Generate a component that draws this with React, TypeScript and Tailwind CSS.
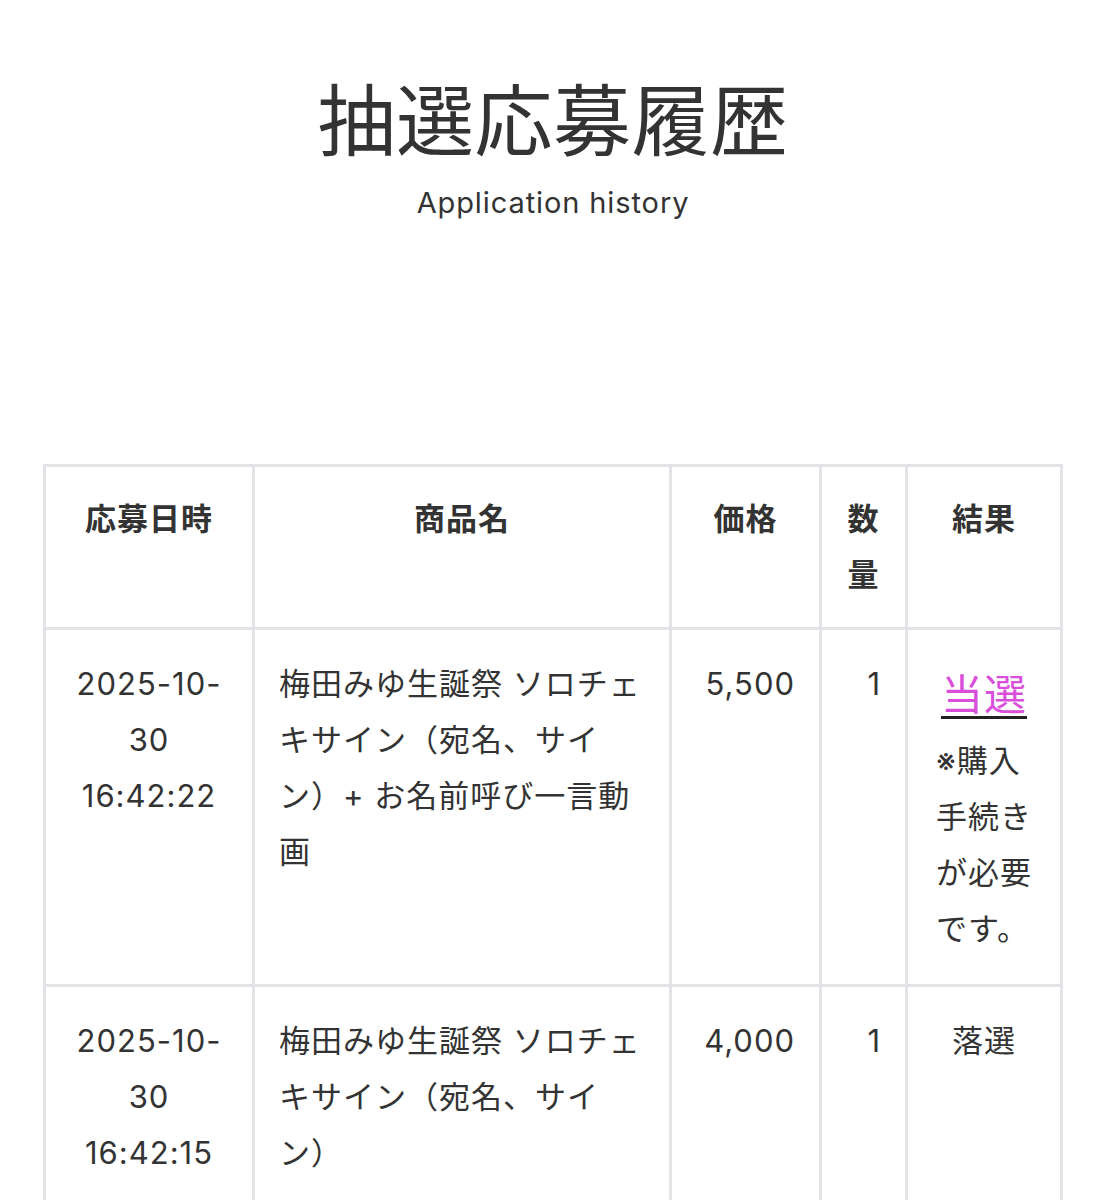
import React from 'react';

type Entry = {
  date: string[];
  name: React.ReactNode;
  price: string;
  qty: number;
  won: boolean;
};

const entries: Entry[] = [
  {
    date: ['2025-10-', '30', '16:42:22'],
    name: (
      <>
        梅田みゆ生誕祭 ソロチェ<br />キサイン（宛名、サイ<br />ン）+ お名前呼び一言動<br />画
      </>
    ),
    price: '5,500',
    qty: 1,
    won: true,
  },
  {
    date: ['2025-10-', '30', '16:42:15'],
    name: (
      <>
        梅田みゆ生誕祭 ソロチェ<br />キサイン（宛名、サイ<br />ン）
      </>
    ),
    price: '4,000',
    qty: 1,
    won: false,
  },
];

const th = 'border-[3px] border-[#e1e3e7] px-6 pt-6 pb-6 align-top text-center font-bold';
const td = 'border-[3px] border-[#e1e3e7] px-6 pt-[26px] pb-[27px] align-top';

const App: React.FC = () => {
  return (
    <div
      className="min-h-[1200px] bg-white px-[43px] text-[#333333]"
      style={{ fontFamily: 'Inter, "Noto Sans CJK JP", sans-serif' }}
    >
      <div className="pt-[75px] text-center">
        <h1 className="text-[78px] leading-[94px] font-normal tracking-[0.5px]">抽選応募履歴</h1>
        <p className="mt-[14px] text-[29px] leading-[40px] tracking-[0.9px]">Application history</p>
      </div>

      <table className="mt-[241px] w-[1017px] table-fixed border-collapse text-[31px] leading-[56px] tracking-[1px]">
        <colgroup>
          <col className="w-[209px]" />
          <col className="w-[417px]" />
          <col className="w-[150px]" />
          <col className="w-[86px]" />
          <col className="w-[155px]" />
        </colgroup>
        <thead>
          <tr>
            <th className={th}>応募日時</th>
            <th className={th}>商品名</th>
            <th className={th}>価格</th>
            <th className={th}>
              数<br />量
            </th>
            <th className={th}>結果</th>
          </tr>
        </thead>
        <tbody>
          {entries.map((e, i) => (
            <tr key={i}>
              <td className={`${td} text-center`}>
                {e.date.map((d) => (
                  <div key={d}>{d}</div>
                ))}
              </td>
              <td className={`${td} text-left`}>{e.name}</td>
              <td className={`${td} text-right`}>{e.price}</td>
              <td className={`${td} text-right`}>{e.qty}</td>
              <td className={`${td} text-center`}>
                {e.won ? (
                  <>
                    <a
                      href="#"
                      className="block text-[42px] leading-[77px] text-[#d94fdc] underline decoration-[#222222] decoration-[3px] underline-offset-[6px]"
                    >
                      当選
                    </a>
                    <div className="text-left pl-[4px]">
                      ※購入<br />手続き<br />が必要<br />です。
                    </div>
                  </>
                ) : (
                  '落選'
                )}
              </td>
            </tr>
          ))}
        </tbody>
      </table>
    </div>
  );
};

export default App;
